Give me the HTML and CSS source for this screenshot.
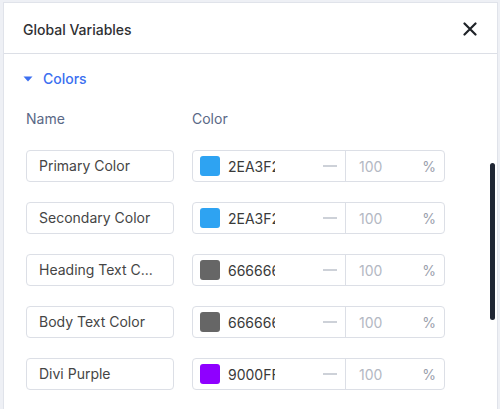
FILE: index.html
```html
<!DOCTYPE html>
<html>
<head>
<meta charset="utf-8">
<link rel="stylesheet" href="styles.css">
</head>
<body>
<div class="panel">
  <div class="header">
    <span class="title">Global Variables</span>
    <svg class="close" width="14" height="14" viewBox="0 0 14 14"><path d="M1.5 1.5 L12.5 12.5 M12.5 1.5 L1.5 12.5" stroke="#1f2328" stroke-width="2.2" stroke-linecap="round"/></svg>
  </div>
  <div class="section">
    <div class="section-title">
      <svg class="caret" width="10" height="6" viewBox="0 0 10 6"><path d="M0.5 0.5 H9.5 L5 5.5 Z" fill="#3c6ff0"/></svg>
      <span>Colors</span>
    </div>
    <div class="grid">
      <div class="label">Name</div>
      <div class="label">Color</div>

      <div class="name-field">Primary Color</div>
      <div class="color-field">
        <div class="left"><span class="swatch blue"></span><span class="hex">2EA3F2</span><span class="dash"></span></div>
        <div class="right"><span class="num">100</span><span class="pct">%</span></div>
      </div>

      <div class="name-field">Secondary Color</div>
      <div class="color-field">
        <div class="left"><span class="swatch blue"></span><span class="hex">2EA3F2</span><span class="dash"></span></div>
        <div class="right"><span class="num">100</span><span class="pct">%</span></div>
      </div>

      <div class="name-field">Heading Text C...</div>
      <div class="color-field">
        <div class="left"><span class="swatch gray"></span><span class="hex">666666</span><span class="dash"></span></div>
        <div class="right"><span class="num">100</span><span class="pct">%</span></div>
      </div>

      <div class="name-field">Body Text Color</div>
      <div class="color-field">
        <div class="left"><span class="swatch gray"></span><span class="hex">666666</span><span class="dash"></span></div>
        <div class="right"><span class="num">100</span><span class="pct">%</span></div>
      </div>

      <div class="name-field">Divi Purple</div>
      <div class="color-field">
        <div class="left"><span class="swatch purple"></span><span class="hex">9000FF</span><span class="dash"></span></div>
        <div class="right"><span class="num">100</span><span class="pct">%</span></div>
      </div>
    </div>
  </div>
  <div class="scrollbar"></div>
</div>
</body>
</html>
```

FILE: styles.css
```css
html, body {
  margin: 0;
  padding: 0;
}
body {
  background: #eef0f5;
  font-family: Inter, "Noto Sans", sans-serif;
  font-size: 14px;
  height: 409px;
  overflow: hidden;
}
.panel {
  position: relative;
  margin: 2px 2px 0 3px;
  height: 420px;
  background: #ffffff;
  border: 1px solid #e0e3ea;
  border-bottom: none;
  box-sizing: border-box;
}
.header {
  height: 51px;
  box-sizing: border-box;
  border-bottom: 1px solid #dcdfe6;
  display: flex;
  align-items: center;
  justify-content: space-between;
  padding: 2px 20px 0 19px;
}
.title {
  color: #2f3033;
  font-weight: 500;
  font-size: 14px;
}
.close {
  display: block;
}
.section {
  padding: 14px 20px 0 19px;
}
.section-title {
  height: 20px;
  display: flex;
  align-items: center;
  color: #3c6ff0;
  font-weight: 500;
}
.caret {
  margin-right: 10px;
  margin-top: 1px;
}
.grid {
  margin-top: 21px;
  padding-left: 3px;
  display: grid;
  grid-template-columns: 148px 253px;
  column-gap: 18px;
  row-gap: 20px;
}
.label {
  height: 20px;
  line-height: 20px;
  color: #5a6886;
  margin-bottom: 1px;
}
.name-field {
  height: 32px;
  box-sizing: border-box;
  border: 1px solid #dcdfe6;
  border-radius: 4px;
  padding: 0 12px;
  line-height: 30px;
  color: #454545;
  white-space: nowrap;
  overflow: hidden;
}
.color-field {
  height: 32px;
  box-sizing: border-box;
  border: 1px solid #dcdfe6;
  border-radius: 4px;
  display: flex;
}
.left {
  width: 152px;
  display: flex;
  align-items: center;
  padding-left: 7px;
  box-sizing: border-box;
}
.swatch {
  width: 20px;
  height: 20px;
  border-radius: 3px;
  flex: none;
}
.blue { background: #2ea3f2; }
.gray { background: #666666; }
.purple { background: #8f00ff; }
.hex {
  margin-left: 8px;
  width: 47px;
  overflow: hidden;
  white-space: nowrap;
  color: #3a3a3a;
}
.dash {
  margin-left: auto;
  margin-right: 8px;
  width: 14px;
  height: 2px;
  background: #cdd1d8;
}
.right {
  flex: 1;
  border-left: 1px solid #dcdfe6;
  display: flex;
  align-items: center;
  justify-content: space-between;
  padding: 0 8px 0 13px;
}
.num {
  color: #b3b8c3;
}
.pct {
  color: #9aa0ac;
}
.scrollbar {
  position: absolute;
  left: 486px;
  top: 160px;
  width: 5px;
  height: 157px;
  border-radius: 3px;
  background: #1f2633;
}
```
